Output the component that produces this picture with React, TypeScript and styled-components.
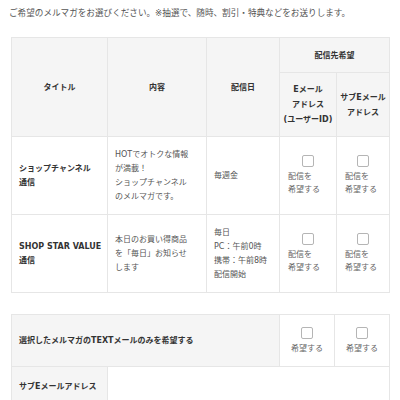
import styled, { createGlobalStyle } from 'styled-components';

const GlobalStyle = createGlobalStyle`
  body {
    margin: 0;
    background: #fff;
    font-family: "DejaVu Sans", "Noto Sans CJK JP", sans-serif;
  }
`;

export default function App() {
  return (
    <>
      <GlobalStyle />
      <Page>
        <Intro>ご希望のメルマガをお選びください。※抽選で、随時、割引・特典などをお送りします。</Intro>

        <Table>
          <colgroup>
            <col style={{ width: 96 }} />
            <col style={{ width: 99 }} />
            <col style={{ width: 73 }} />
            <col style={{ width: 57 }} />
            <col style={{ width: 53 }} />
          </colgroup>
          <thead>
            <Row $h={35}>
              <HeadCell rowSpan={2}>タイトル</HeadCell>
              <HeadCell rowSpan={2}>内容</HeadCell>
              <HeadCell rowSpan={2}>配信日</HeadCell>
              <HeadCell colSpan={2}>配信先希望</HeadCell>
            </Row>
            <Row $h={64}>
              <HeadCell>
                Eメール
                <br />
                アドレス
                <br />
                (ユーザーID)
              </HeadCell>
              <HeadCell>
                サブEメール
                <br />
                アドレス
              </HeadCell>
            </Row>
          </thead>
          <tbody>
            <Row $h={78}>
              <TitleCell>
                ショップチャンネル
                <br />
                通信
              </TitleCell>
              <BodyCell>
                HOTでオトクな情報
                <br />
                が満載！
                <br />
                ショップチャンネル
                <br />
                のメルマガです。
              </BodyCell>
              <BodyCell>毎週金</BodyCell>
              <CheckCell>
                <Check />
                <CheckLabel>
                  配信を
                  <br />
                  希望する
                </CheckLabel>
              </CheckCell>
              <CheckCell>
                <Check />
                <CheckLabel>
                  配信を
                  <br />
                  希望する
                </CheckLabel>
              </CheckCell>
            </Row>
            <Row $h={78}>
              <TitleCell>
                SHOP STAR VALUE
                <br />
                通信
              </TitleCell>
              <BodyCell>
                本日のお買い得商品
                <br />
                を「毎日」お知らせ
                <br />
                します
              </BodyCell>
              <BodyCell>
                毎日
                <br />
                PC：午前0時
                <br />
                携帯：午前8時
                <br />
                配信開始
              </BodyCell>
              <CheckCell>
                <Check />
                <CheckLabel>
                  配信を
                  <br />
                  希望する
                </CheckLabel>
              </CheckCell>
              <CheckCell>
                <Check />
                <CheckLabel>
                  配信を
                  <br />
                  希望する
                </CheckLabel>
              </CheckCell>
            </Row>
          </tbody>
        </Table>

        <SecondTable>
          <colgroup>
            <col style={{ width: 96 }} />
            <col style={{ width: 172 }} />
            <col style={{ width: 55 }} />
            <col style={{ width: 55 }} />
          </colgroup>
          <tbody>
            <Row $h={52}>
              <SideHead colSpan={2}>選択したメルマガのTEXTメールのみを希望する</SideHead>
              <CheckCell $center>
                <Check />
                <CheckLabel>希望する</CheckLabel>
              </CheckCell>
              <CheckCell $center>
                <Check />
                <CheckLabel>希望する</CheckLabel>
              </CheckCell>
            </Row>
            <Row $h={40}>
              <SideHead>サブEメールアドレス</SideHead>
              <BodyCell colSpan={3}></BodyCell>
            </Row>
          </tbody>
        </SecondTable>
      </Page>
    </>
  );
}

const Page = styled.div`
  padding: 7px 11px 0;
  color: #555;
`;

const Intro = styled.p`
  margin: 0 0 18px -2px;
  font-size: 8.6px;
  line-height: 12px;
  color: #555;
  white-space: nowrap;
`;

const Table = styled.table`
  width: 378px;
  table-layout: fixed;
  border-collapse: collapse;
  font-size: 8px;
  line-height: 14px;

  th,
  td {
    border: 1px solid #e6e6e6;
    vertical-align: middle;
  }
`;

const SecondTable = styled(Table)`
  margin-top: 21px;
`;

const Row = styled.tr<{ $h: number }>`
  height: ${(p) => p.$h}px;
`;

const HeadCell = styled.th`
  background: #f5f5f5;
  color: #333;
  font-weight: 700;
  text-align: center;
  padding: 0;
  white-space: nowrap;
  line-height: 15px;
`;

const TitleCell = styled.td`
  color: #333;
  font-weight: 700;
  padding: 0 7px;
  text-align: left;
  white-space: nowrap;
`;

const SideHead = styled.th`
  background: #f5f5f5;
  color: #333;
  font-weight: 700;
  padding: 0 7px;
  text-align: left;
  white-space: nowrap;
`;

const BodyCell = styled.td`
  color: #555;
  padding: 0 7px;
  text-align: left;
  white-space: nowrap;
`;

const CheckCell = styled.td<{ $center?: boolean }>`
  padding: 0 8px;
  text-align: ${(p) => (p.$center ? 'center' : 'left')};
  white-space: nowrap;
`;

const Check = styled.input.attrs({ type: 'checkbox' })`
  appearance: none;
  display: block;
  width: 12px;
  height: 12px;
  margin: 0 auto 3px;
  border: 1px solid #b5b5b5;
  border-radius: 2px;
  background: #fff;
`;

const CheckLabel = styled.span`
  display: block;
  color: #666;
  line-height: 13px;
`;
